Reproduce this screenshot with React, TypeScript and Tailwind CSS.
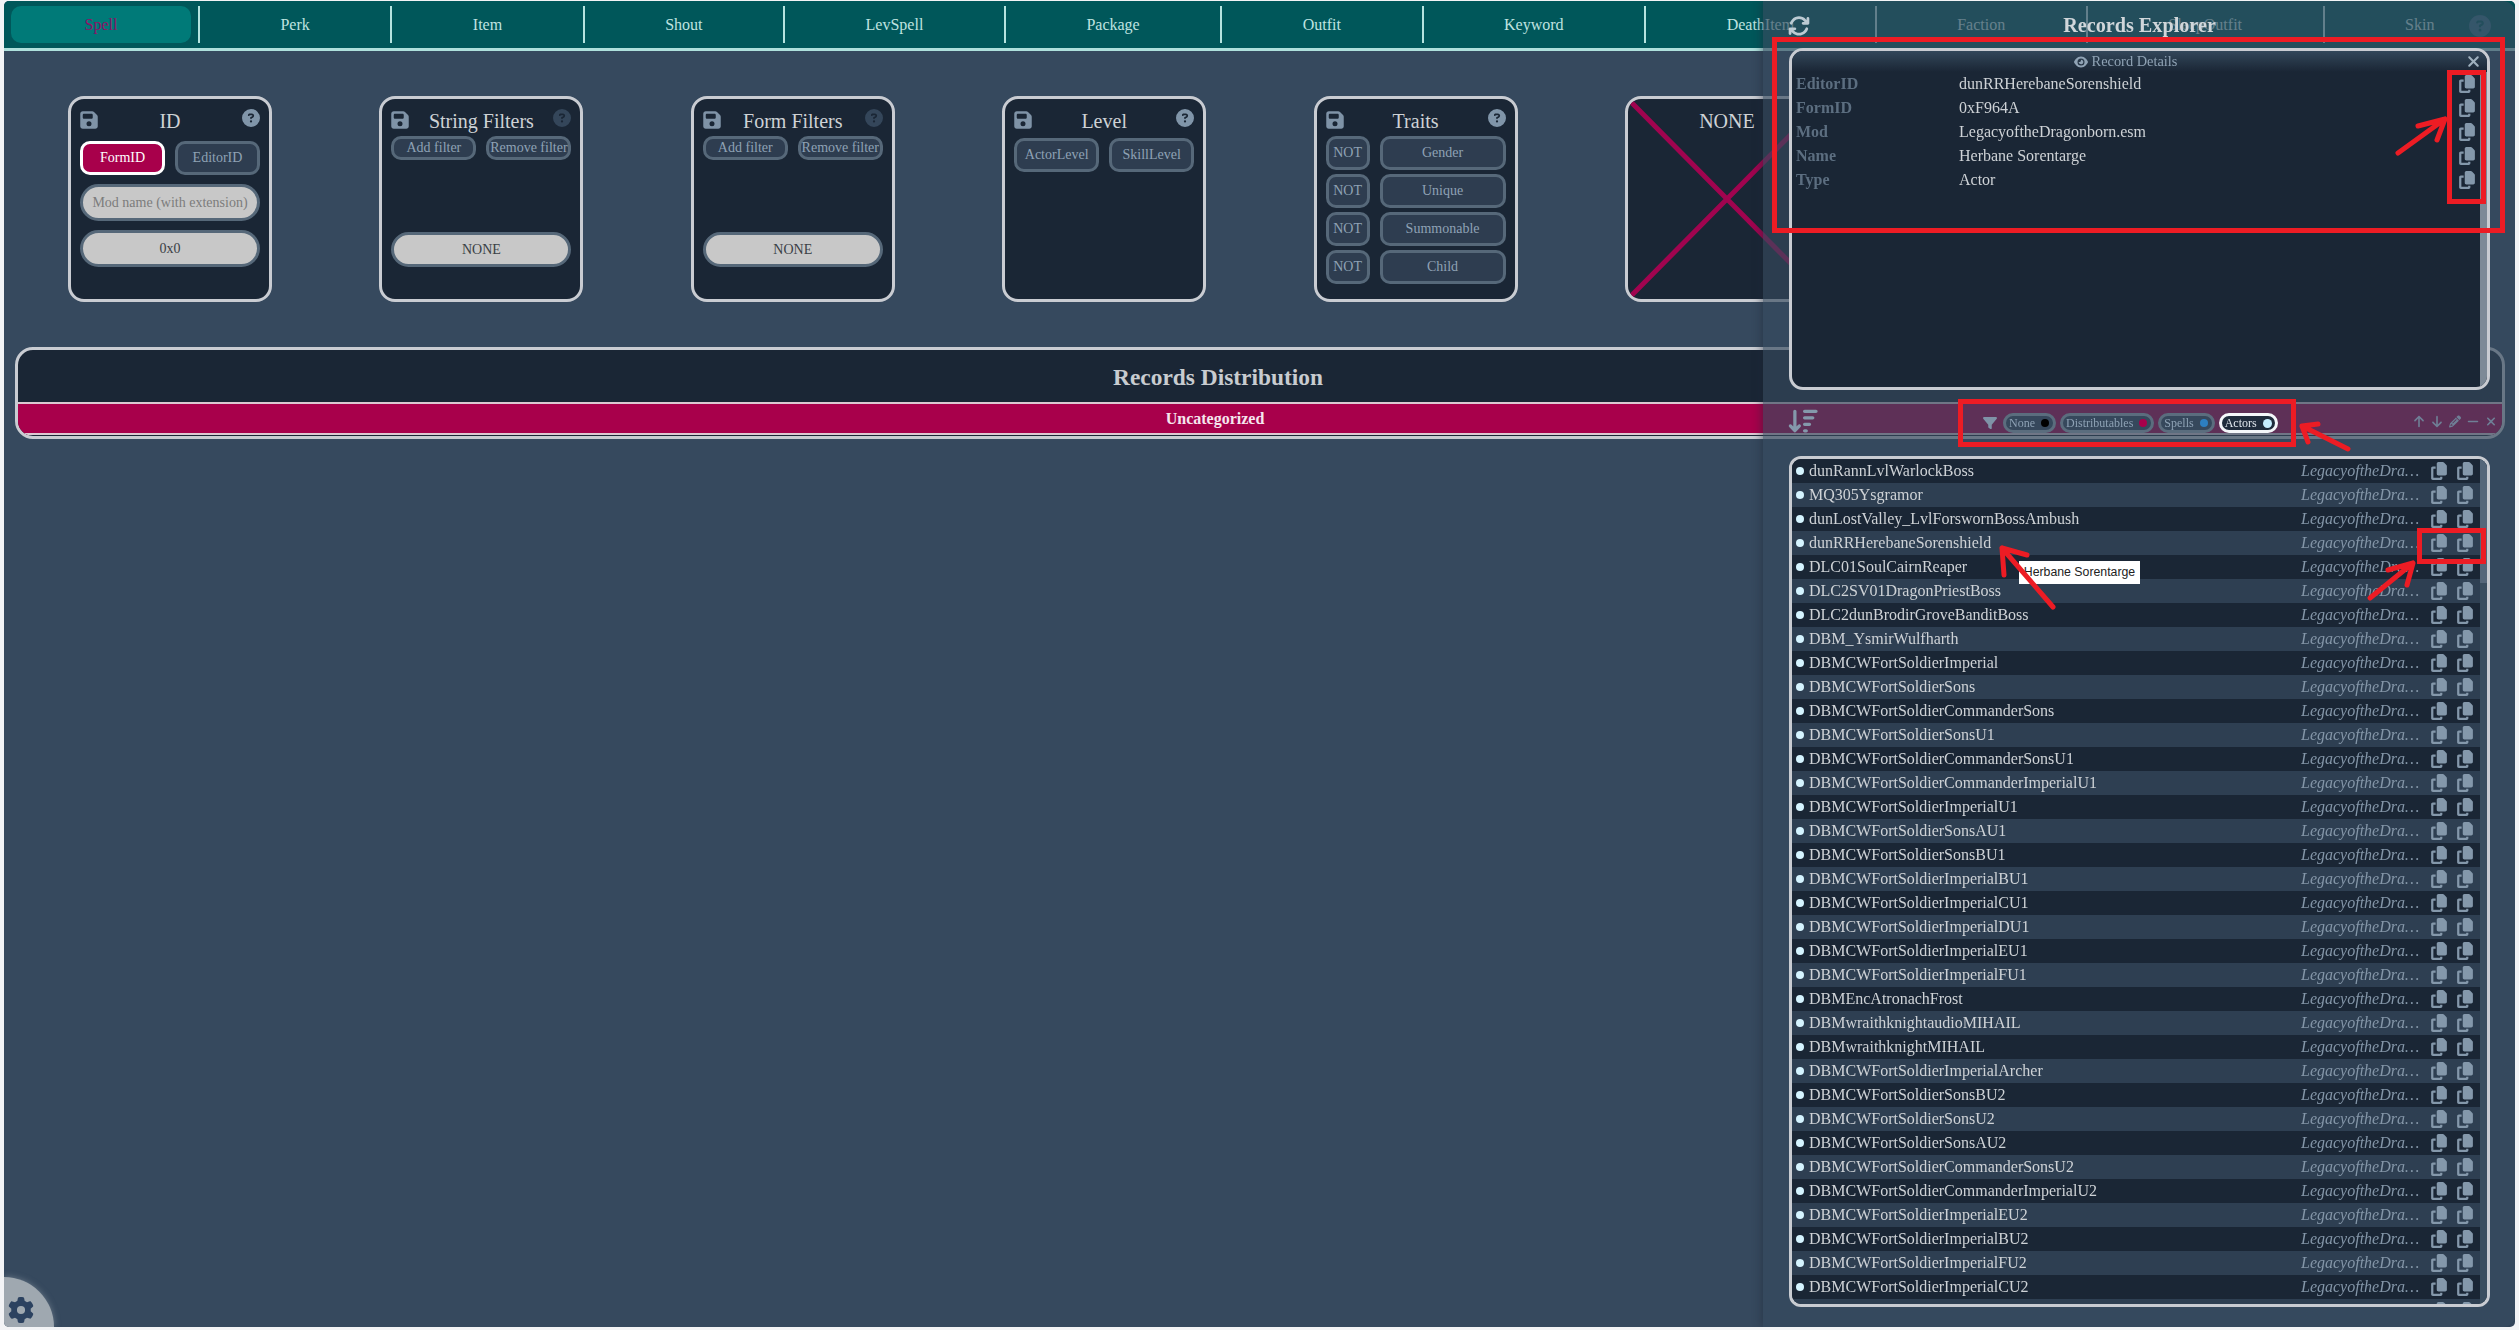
import React from "react";
import {
  FaArrowDown,
  FaArrowDownWideShort,
  FaArrowUp,
  FaArrowsRotate,
  FaCircleQuestion,
  FaCopy,
  FaEye,
  FaFilter,
  FaFloppyDisk,
  FaGear,
  FaMinus,
  FaPencil,
  FaXmark,
} from "react-icons/fa6";

const tabs = ["Spell", "Perk", "Item", "Shout", "LevSpell", "Package", "Outfit", "Keyword", "DeathItem", "Faction", "SleepOutfit", "Skin"];

const names = [
  "dunRannLvlWarlockBoss",
  "MQ305Ysgramor",
  "dunLostValley_LvlForswornBossAmbush",
  "dunRRHerebaneSorenshield",
  "DLC01SoulCairnReaper",
  "DLC2SV01DragonPriestBoss",
  "DLC2dunBrodirGroveBanditBoss",
  "DBM_YsmirWulfharth",
  "DBMCWFortSoldierImperial",
  "DBMCWFortSoldierSons",
  "DBMCWFortSoldierCommanderSons",
  "DBMCWFortSoldierSonsU1",
  "DBMCWFortSoldierCommanderSonsU1",
  "DBMCWFortSoldierCommanderImperialU1",
  "DBMCWFortSoldierImperialU1",
  "DBMCWFortSoldierSonsAU1",
  "DBMCWFortSoldierSonsBU1",
  "DBMCWFortSoldierImperialBU1",
  "DBMCWFortSoldierImperialCU1",
  "DBMCWFortSoldierImperialDU1",
  "DBMCWFortSoldierImperialEU1",
  "DBMCWFortSoldierImperialFU1",
  "DBMEncAtronachFrost",
  "DBMwraithknightaudioMIHAIL",
  "DBMwraithknightMIHAIL",
  "DBMCWFortSoldierImperialArcher",
  "DBMCWFortSoldierSonsBU2",
  "DBMCWFortSoldierSonsU2",
  "DBMCWFortSoldierSonsAU2",
  "DBMCWFortSoldierCommanderSonsU2",
  "DBMCWFortSoldierCommanderImperialU2",
  "DBMCWFortSoldierImperialEU2",
  "DBMCWFortSoldierImperialBU2",
  "DBMCWFortSoldierImperialFU2",
  "DBMCWFortSoldierImperialCU2",
  "DBMCWFortSoldierImperialDU2",
];

const details = [
  ["EditorID", "dunRRHerebaneSorenshield"],
  ["FormID", "0xF964A"],
  ["Mod", "LegacyoftheDragonborn.esm"],
  ["Name", "Herbane Sorentarge"],
  ["Type", "Actor"],
];

const btn =
  "flex items-center justify-center border-[3px] border-[#566879] bg-[#2e3d50] text-[14px] leading-none text-[#8ea2b5] rounded-[10px]";
const pill =
  "flex h-[35px] w-full items-center justify-center rounded-full border-[3px] border-[#566879] bg-[#c8c8c8] text-[14px] text-[#3a3f45]";

function Card({ title, dim, children }: { title: string; dim?: boolean; children?: React.ReactNode }) {
  return (
    <div className="h-[206px] w-[204px] shrink-0 rounded-[16px] border-[3px] border-[#c9ccd2] bg-[#1a2635] px-[9px] pt-[10px]">
      <div className="flex h-[27px] items-start justify-between">
        <FaFloppyDisk className="mt-[1px] h-[20px] w-[18px] text-[#7f93a7]" />
        <span className="text-[20px] leading-[24px] text-[#ced2d6]">{title}</span>
        <FaCircleQuestion className={dim ? "text-[18px] text-[#34465a]" : "text-[18px] text-[#8095a9]"} />
      </div>
      {children}
    </div>
  );
}

function FilterCard({ title }: { title: string }) {
  return (
    <Card title={title} dim>
      <div className="flex gap-[10px]">
        <div className={btn + " h-[24px] flex-1 whitespace-nowrap rounded-[8px]"}>Add filter</div>
        <div className={btn + " h-[24px] flex-1 whitespace-nowrap rounded-[8px]"}>Remove filter</div>
      </div>
      <div className={pill + " mt-[72px]"}>NONE</div>
    </Card>
  );
}

function Chip({ label, dot, active }: { label: string; dot: string; active?: boolean }) {
  return (
    <div
      className={
        active
          ? "flex h-[20px] items-center gap-[6px] rounded-full border-[3px] border-[#f4f7fa] bg-[#1f2c3c] pl-[3px] pr-[3px] text-[12px] leading-none text-[#dfe6ec]"
          : "flex h-[20px] items-center gap-[6px] rounded-full border-[3px] border-[#5b6d7e] bg-[#36485c] pl-[3px] pr-[4px] text-[12px] leading-none text-[#8ea2b5]"
      }
    >
      <span>{label}</span>
      <span className={active ? "h-[9px] w-[9px] rounded-full " + dot : "h-[8px] w-[8px] rounded-full " + dot} />
    </div>
  );
}

const actionIcon = "h-[13px] w-[12px]";
const copyIcon = "h-[18px] w-[16px] text-[#8498ab]";

export default function App() {
  return (
    <div className="relative h-[1330px] w-full overflow-hidden bg-[#f3f4f6] pb-[3px] pl-[4px] pr-[4px] pt-[1px] font-[Liberation_Serif,serif]">
      <div className="relative h-full overflow-hidden rounded-[5px] bg-[#36495e]">
        {/* top nav */}
        <div className="flex h-[50px] border-b-[3px] border-[#aee0dc] bg-[#00575a] text-[16px] text-[#bfe3e0]">
          {tabs.map((t, i) => (
            <div key={t} className={i < tabs.length - 1 ? "my-[5px] flex-auto border-r-[2px] border-[#b5e3df] px-[7px]" : "my-[5px] flex-auto px-[7px]"}>
              <div className={i === 0 ? "flex h-full items-center justify-center rounded-[10px] bg-[#007a78] text-[#8c1266]" : "flex h-full items-center justify-center"}>
                {t}
              </div>
            </div>
          ))}
        </div>

        {/* filter cards */}
        <div className="mt-[45px] flex gap-[107.4px] pl-[64px]">
          <Card title="ID">
            <div className="mt-[5px] flex gap-[10px]">
              <div className="flex h-[34px] flex-1 items-center justify-center rounded-[10px] border-[3px] border-white bg-[#a8004b] text-[14px] leading-none text-white">FormID</div>
              <div className={btn + " h-[34px] flex-1"}>EditorID</div>
            </div>
            <input
              readOnly
              placeholder="Mod name (with extension)"
              className="mt-[9px] h-[37px] w-full rounded-full border-[3px] border-[#566879] bg-[#c8c8c8] text-center text-[14px] outline-none placeholder:text-[#7c7c7c]"
            />
            <div className={pill + " mt-[9px] h-[37px]"}>0x0</div>
          </Card>
          <FilterCard title="String Filters" />
          <FilterCard title="Form Filters" />
          <Card title="Level">
            <div className="mt-[2px] flex gap-[10px]">
              <div className={btn + " h-[34px] flex-1"}>ActorLevel</div>
              <div className={btn + " h-[34px] flex-1"}>SkillLevel</div>
            </div>
          </Card>
          <Card title="Traits">
            <div className="flex flex-col gap-[4px]">
              {["Gender", "Unique", "Summonable", "Child"].map((t) => (
                <div key={t} className="flex gap-[10px]">
                  <div className={btn + " h-[34px] w-[44px]"}>NOT</div>
                  <div className={btn + " h-[34px] flex-1"}>{t}</div>
                </div>
              ))}
            </div>
          </Card>
          <div className="relative h-[206px] w-[204px] shrink-0 overflow-hidden rounded-[16px] border-[3px] border-[#c9ccd2] bg-[#1a2635] pt-[10px] text-center text-[20px] leading-[24px] text-[#ced2d6]">
            NONE
            <svg className="absolute inset-0 h-full w-full" viewBox="0 0 198 200" preserveAspectRatio="none">
              <path d="M0 0L198 200M198 0L0 200" stroke="#a0044f" strokeWidth="5" fill="none" />
            </svg>
          </div>
        </div>

        {/* records distribution */}
        <div className="ml-[11px] mr-[10px] mt-[45px] h-[92px] overflow-hidden rounded-[18px] border-[3px] border-[#c9ccd2] bg-[#1a2635]">
          <div className="flex h-[52px] items-center justify-center pr-[84px] pt-[3px] text-[23.4px] font-bold text-[#c8ccd0]">Records Distribution</div>
          <div className="flex h-[33px] items-center justify-center border-y-[2px] border-[#dcc9d2] bg-[#a8004b] pr-[90px] text-[16px] font-bold text-[#f5e6ee]">
            Uncategorized
          </div>
        </div>

        {/* settings */}
        <div className="absolute bottom-0 left-0 flex h-[50px] w-[50px] items-end rounded-tr-full bg-[#9fa8b0] pb-[4px] pl-[4px] shadow-[0_0_6px_rgba(160,170,180,0.5)]">
          <FaGear className="text-[26px] text-[#2c4260]" />
        </div>

        {/* records explorer panel */}
        <div className="absolute bottom-0 right-0 top-0 flex w-[752px] flex-col rounded-r-[12px] bg-[#36495ea6] shadow-[-2px_0_8px_rgba(30,40,55,0.45)] backdrop-blur-[0.5px]">
          <div className="flex h-[47px] shrink-0 items-center justify-between pl-[25px] pr-[24px] pt-[2px]">
            <FaArrowsRotate className="text-[22px] text-[#bccad3]" />
            <span className="text-[20.2px] font-bold text-[#d0d6da]">Records Explorer</span>
            <FaCircleQuestion className="text-[22px] text-[#35566a]" />
          </div>

          {/* details */}
          <div className="ml-[26px] mr-[25px] flex h-[342px] shrink-0 flex-col overflow-hidden rounded-[14px] border-[3px] border-[#c9ccd2] bg-[#1a2635]">
            <div className="flex h-[21px] shrink-0 items-center bg-gradient-to-b from-[#33475a] to-[#1a2635] text-[14.4px] text-[#8fa2b4]">
              <div className="flex flex-1 items-center justify-center gap-[4px] pr-[6px]">
                <FaEye className="text-[14px]" />
                <span>Record Details</span>
              </div>
              <FaXmark className="mr-[5px] text-[17px] text-[#9fb0be]" />
            </div>
            <div className="flex min-h-0 flex-1">
              <div className="flex-1">
                {details.map(([k, v]) => (
                  <div key={k} className="flex h-[24px] items-center pl-[4px] pr-[5px] text-[16px]">
                    <span className="w-[163px] font-bold text-[#5c6e80]">{k}</span>
                    <span className="flex-1 text-[#ced2d6]">{v}</span>
                    <FaCopy className={copyIcon} />
                  </div>
                ))}
              </div>
              <div className="w-[7px] bg-[#7d8a97]" />
            </div>
          </div>

          {/* toolbar */}
          <div className="flex h-[66px] shrink-0 items-center pl-[25px] pr-[18px]">
            <FaArrowDownWideShort className="mb-[4px] h-[26px] w-[30px] text-[#8498ab]" />
            <div className="ml-[165px] flex items-center gap-[4px]">
              <FaFilter className="mr-[2px] h-[14px] w-[14px] text-[#7f93a7]" />
              <Chip label="None" dot="bg-black" />
              <Chip label="Distributables" dot="bg-[#a8004b]" />
              <Chip label="Spells" dot="bg-[#2d7fc0]" />
              <Chip label="Actors" dot="bg-[#c5eeff]" active />
            </div>
            <div className="mb-[4px] ml-auto flex items-center gap-[6px] text-[#6f7f96]">
              <FaArrowUp className={actionIcon} />
              <FaArrowDown className={actionIcon} />
              <FaPencil className={actionIcon} />
              <FaMinus className={actionIcon} />
              <FaXmark className={actionIcon} />
            </div>
          </div>

          {/* list */}
          <div className="mb-[20px] ml-[26px] mr-[25px] flex min-h-0 flex-1 overflow-hidden rounded-[12px] border-[3px] border-[#c9ccd2] bg-[#1a2635]">
            <div className="min-w-0 flex-1">
              {names.map((n, i) => (
                <div key={n} className={i % 2 === 0 ? "flex h-[24px] items-center bg-[#1a2635] pl-[4px] pr-[7px] text-[16px]" : "flex h-[24px] items-center bg-[#2e3f52] pl-[4px] pr-[7px] text-[16px]"}>
                  <span className="h-[8px] w-[8px] shrink-0 rounded-full bg-[#d5f4ff]" />
                  <span className="ml-[5px] flex-1 truncate text-[#ced2d6]">{n}</span>
                  <span className="w-[121px] truncate italic text-[#8496a8]">LegacyoftheDragonborn.esm</span>
                  <FaCopy className={"ml-[9px] " + copyIcon} />
                  <FaCopy className={"ml-[10px] " + copyIcon} />
                </div>
              ))}
            </div>
            <div className="flex w-[7px] flex-col bg-[#3a4e60]">
              <div className="h-[124px] bg-[#55677a]" />
            </div>
          </div>
        </div>
      </div>

      {/* tooltip */}
      <div className="absolute left-[2019px] top-[561px] flex h-[23px] w-[121px] items-center justify-center whitespace-nowrap bg-white font-[Liberation_Sans,sans-serif] text-[12.3px] text-[#222]">
        Herbane Sorentarge
      </div>

      {/* red annotations */}
      <div className="absolute left-[1772px] top-[37px] h-[196px] w-[733px] border-[5px] border-[#ed1c24]" />
      <div className="absolute left-[2447px] top-[70px] h-[134px] w-[39px] border-[5px] border-[#ed1c24]" />
      <div className="absolute left-[1958px] top-[399px] h-[48px] w-[338px] border-[5px] border-[#ed1c24]" />
      <div className="absolute left-[2417px] top-[528px] h-[36px] w-[69px] border-[5px] border-[#ed1c24]" />
      <svg className="absolute inset-0 h-[1330px] w-[2519px]" viewBox="0 0 2519 1330" fill="none" stroke="#ed1c24" strokeWidth="5" strokeLinecap="round" strokeLinejoin="round">
        <path d="M2398 153L2445 119M2418 126L2445 119L2437 140" />
        <path d="M2348 449L2302 426M2318 424L2302 426L2308 442" />
        <path d="M2370 598L2413 563M2388 570L2413 563L2407 585" />
        <path d="M2053 607L2002 548M2027 555L2002 548L2004 575" />
      </svg>
    </div>
  );
}
